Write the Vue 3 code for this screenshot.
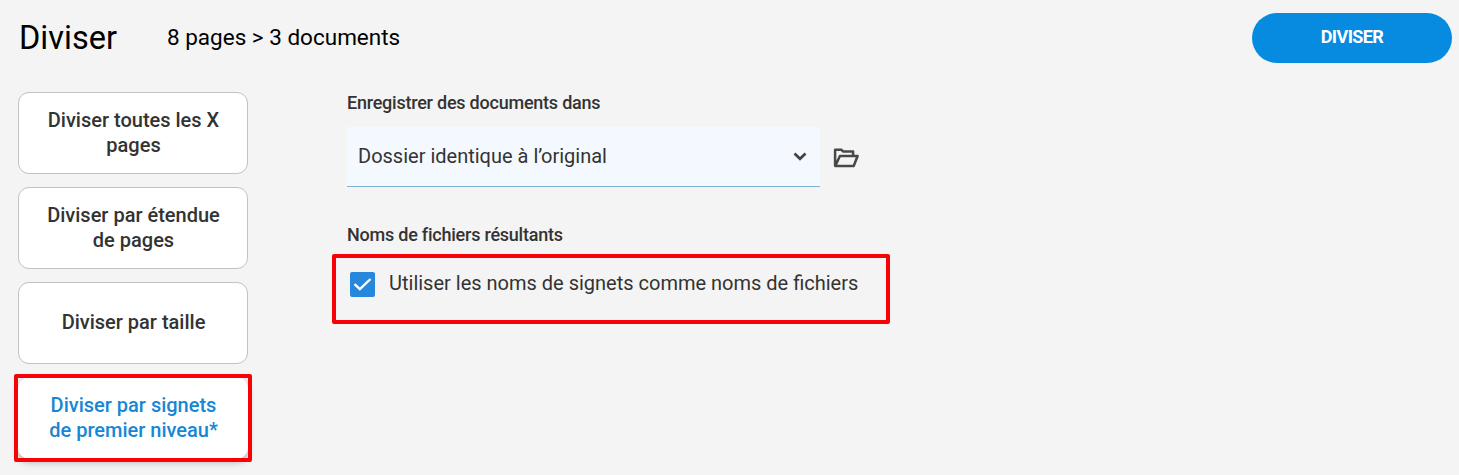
<template>
  <div class="split-panel">
    <header class="panel-header">
      <h1 class="panel-title">Diviser</h1>
      <span class="panel-summary">{{ pageCount }} pages &gt; {{ documentCount }} documents</span>
      <button class="split-btn" type="button"><span>DIVISER</span></button>
    </header>

    <div class="panel-body">
      <nav class="mode-list">
        <button
          v-for="mode in modes"
          :key="mode.id"
          type="button"
          class="mode-btn"
          :class="{ active: mode.id === selectedMode }"
          @click="selectedMode = mode.id"
        >
          <span class="mode-label">{{ mode.label }}</span>
          <span v-if="mode.id === selectedMode" class="highlight"></span>
        </button>
      </nav>

      <section class="options">
        <h2 class="option-title">Enregistrer des documents dans</h2>
        <div class="folder-row">
          <div class="select">
            <span class="select-value">Dossier identique à l’original</span>
            <svg class="select-arrow" viewBox="0 0 14 9" width="14" height="9">
              <path d="M1.5 1.5L7 6.8L12.5 1.5" fill="none" stroke="#444" stroke-width="2.7" />
            </svg>
          </div>
          <button class="folder-btn" type="button" title="Parcourir">
            <svg viewBox="0 0 26 20" width="26" height="20">
              <path
                d="M2.1 18V1.8H8.5L10.3 3.6H20.1V8M2.3 18L6.9 8H24.6L20.7 18Z"
                fill="none"
                stroke="#484848"
                stroke-width="2.5"
                stroke-linejoin="round"
              />
            </svg>
          </button>
        </div>

        <h2 class="option-title names-title">Noms de fichiers résultants</h2>
        <label class="checkbox-row">
          <input v-model="useBookmarkNames" type="checkbox" class="checkbox-input" />
          <span class="checkbox" :class="{ checked: useBookmarkNames }">
            <svg v-if="useBookmarkNames" viewBox="0 0 25 25" width="25" height="25">
              <path d="M4.5 12.2L9.9 17.2L20.5 7" fill="none" stroke="#fff" stroke-width="2.4" />
            </svg>
          </span>
          <span class="checkbox-label">Utiliser les noms de signets comme noms de fichiers</span>
        </label>
      </section>
    </div>
  </div>
</template>

<script setup>
import { ref } from 'vue'

const pageCount = 8
const documentCount = 3

const modes = [
  { id: 'pages', label: 'Diviser toutes les X pages' },
  { id: 'range', label: 'Diviser par étendue de pages' },
  { id: 'size', label: 'Diviser par taille' },
  { id: 'bookmarks', label: 'Diviser par signets de premier niveau*' }
]

const selectedMode = ref('bookmarks')
const useBookmarkNames = ref(true)
</script>

<style>
body {
  background: #f4f4f4;
  overflow: hidden;
}
</style>

<style scoped>
.split-panel {
  box-sizing: border-box;
  height: 475px;
  padding: 12px 7px 0 18px;
  background: #f4f4f4;
  color: #333;
  font-family: Roboto, 'Liberation Sans', sans-serif;
}

button {
  padding: 0;
  border: 0;
  background: none;
  font-family: inherit;
  cursor: pointer;
}

.panel-header {
  display: flex;
  align-items: center;
  height: 51px;
  color: #000;
}

.panel-title {
  box-sizing: border-box;
  width: 149px;
  margin: 0;
  padding-left: 1px;
  font-size: 32.5px;
  font-weight: 400;
  line-height: 40px;
}

.panel-summary {
  margin-bottom: 2px;
  font-size: 22.5px;
  line-height: 28px;
}

.split-btn {
  width: 200px;
  height: 50px;
  margin: 1px 0 0 auto;
  padding: 0 0 3px;
  border-radius: 25px;
  background: #078be0;
  color: #fff;
  font-size: 18px;
  font-weight: 700;
  letter-spacing: -0.6px;
}

.panel-body {
  display: flex;
  align-items: flex-start;
  margin-top: 29px;
}

.mode-list {
  display: flex;
  flex-direction: column;
  gap: 13px;
  width: 230px;
}

.mode-btn {
  position: relative;
  display: flex;
  align-items: center;
  justify-content: center;
  height: 82px;
  padding: 0 0 1px 1px;
  border: 1px solid #c2c2c2;
  border-radius: 11px;
  background: #fff;
  color: #333;
  font-size: 20px;
  font-weight: 500;
  line-height: 25px;
}

.mode-label {
  width: 180px;
}

.mode-btn.active {
  border-color: #fff;
  box-shadow: 0 3px 7px rgba(0, 0, 0, 0.3);
  color: #1787d4;
}

.highlight {
  position: absolute;
  inset: -4.5px -5px -4px -5px;
  border: 4px solid #f80208;
  border-radius: 2px;
}

.options {
  width: 560px;
  margin-left: 99px;
}

.option-title {
  margin: 0;
  color: #333;
  font-size: 18px;
  font-weight: 500;
  letter-spacing: -0.23px;
  line-height: 22px;
}

.folder-row {
  display: flex;
  align-items: center;
  margin-top: 13px;
}

.select {
  box-sizing: border-box;
  display: flex;
  align-items: center;
  justify-content: space-between;
  width: 473px;
  height: 60px;
  padding: 0 14px 1px 11px;
  border-bottom: 1px solid #7fb2d6;
  background: #f3f9fe;
}

.select-value {
  font-size: 20px;
  line-height: 25px;
}

.select-arrow {
  margin-right: -1px;
}

.folder-btn {
  display: flex;
  margin: 1px 0 0 13px;
}

.names-title {
  margin-top: 37px;
}

.checkbox-row {
  box-sizing: border-box;
  display: flex;
  align-items: flex-start;
  width: 558px;
  height: 70px;
  margin: 8px 0 0 -15px;
  padding: 14px 0 0 14px;
  border: 4px solid #f80208;
  border-radius: 2px;
  cursor: pointer;
}

.checkbox-input {
  display: none;
}

.checkbox {
  box-sizing: border-box;
  width: 25px;
  height: 25px;
  border: 2px solid #777;
  border-radius: 2px;
}

.checkbox.checked {
  border: 0;
  background: #2787dd;
}

.checkbox svg {
  display: block;
}

.checkbox-label {
  margin: -1px 0 0 14px;
  font-size: 20px;
  line-height: 25px;
}
</style>
